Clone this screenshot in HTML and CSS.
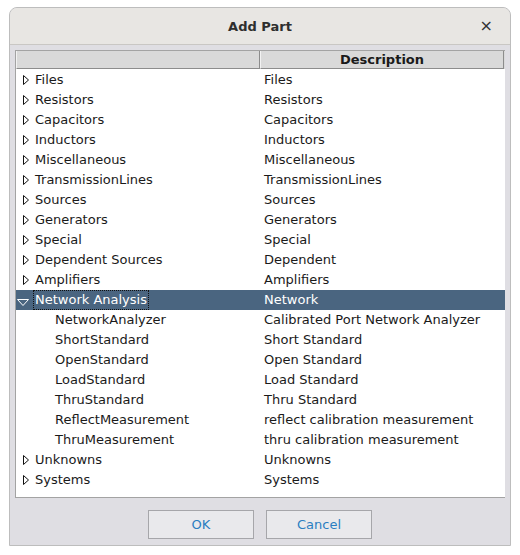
FILE: index.html
```html
<!DOCTYPE html>
<html>
<head>
<meta charset="utf-8">
<link rel="stylesheet" href="styles.css">
</head>
<body>
<div class="window">
  <div class="titlebar">
    <span class="title">Add Part</span>
    <span class="close">×</span>
  </div>
  <div class="content">
    <div class="tree">
      <div class="header">
        <div class="hcell"></div>
        <div class="hcell">Description</div>
      </div>
      <div class="rows">
        <div class="row"><div class="c1"><svg class="tri" width="6" height="10" viewBox="0 0 6 10"><path d="M0.5 0.5 L5.5 5 L0.5 9.5 Z" fill="none" stroke="#111" stroke-width="1"/></svg>Files</div><div class="c2">Files</div></div>
        <div class="row"><div class="c1"><svg class="tri" width="6" height="10" viewBox="0 0 6 10"><path d="M0.5 0.5 L5.5 5 L0.5 9.5 Z" fill="none" stroke="#111" stroke-width="1"/></svg>Resistors</div><div class="c2">Resistors</div></div>
        <div class="row"><div class="c1"><svg class="tri" width="6" height="10" viewBox="0 0 6 10"><path d="M0.5 0.5 L5.5 5 L0.5 9.5 Z" fill="none" stroke="#111" stroke-width="1"/></svg>Capacitors</div><div class="c2">Capacitors</div></div>
        <div class="row"><div class="c1"><svg class="tri" width="6" height="10" viewBox="0 0 6 10"><path d="M0.5 0.5 L5.5 5 L0.5 9.5 Z" fill="none" stroke="#111" stroke-width="1"/></svg>Inductors</div><div class="c2">Inductors</div></div>
        <div class="row"><div class="c1"><svg class="tri" width="6" height="10" viewBox="0 0 6 10"><path d="M0.5 0.5 L5.5 5 L0.5 9.5 Z" fill="none" stroke="#111" stroke-width="1"/></svg>Miscellaneous</div><div class="c2">Miscellaneous</div></div>
        <div class="row"><div class="c1"><svg class="tri" width="6" height="10" viewBox="0 0 6 10"><path d="M0.5 0.5 L5.5 5 L0.5 9.5 Z" fill="none" stroke="#111" stroke-width="1"/></svg>TransmissionLines</div><div class="c2">TransmissionLines</div></div>
        <div class="row"><div class="c1"><svg class="tri" width="6" height="10" viewBox="0 0 6 10"><path d="M0.5 0.5 L5.5 5 L0.5 9.5 Z" fill="none" stroke="#111" stroke-width="1"/></svg>Sources</div><div class="c2">Sources</div></div>
        <div class="row"><div class="c1"><svg class="tri" width="6" height="10" viewBox="0 0 6 10"><path d="M0.5 0.5 L5.5 5 L0.5 9.5 Z" fill="none" stroke="#111" stroke-width="1"/></svg>Generators</div><div class="c2">Generators</div></div>
        <div class="row"><div class="c1"><svg class="tri" width="6" height="10" viewBox="0 0 6 10"><path d="M0.5 0.5 L5.5 5 L0.5 9.5 Z" fill="none" stroke="#111" stroke-width="1"/></svg>Special</div><div class="c2">Special</div></div>
        <div class="row"><div class="c1"><svg class="tri" width="6" height="10" viewBox="0 0 6 10"><path d="M0.5 0.5 L5.5 5 L0.5 9.5 Z" fill="none" stroke="#111" stroke-width="1"/></svg>Dependent Sources</div><div class="c2">Dependent</div></div>
        <div class="row"><div class="c1"><svg class="tri" width="6" height="10" viewBox="0 0 6 10"><path d="M0.5 0.5 L5.5 5 L0.5 9.5 Z" fill="none" stroke="#111" stroke-width="1"/></svg>Amplifiers</div><div class="c2">Amplifiers</div></div>
        <div class="row selected"><div class="c1"><svg class="tri-down" width="12" height="7" viewBox="0 0 12 7"><path d="M0.5 0.5 L11.5 0.5 L6 6.5 Z" fill="none" stroke="#ffffff" stroke-width="1"/></svg><span class="focus">Network Analysis</span></div><div class="c2">Network</div></div>
        <div class="row"><div class="c1 child">NetworkAnalyzer</div><div class="c2">Calibrated Port Network Analyzer</div></div>
        <div class="row"><div class="c1 child">ShortStandard</div><div class="c2">Short Standard</div></div>
        <div class="row"><div class="c1 child">OpenStandard</div><div class="c2">Open Standard</div></div>
        <div class="row"><div class="c1 child">LoadStandard</div><div class="c2">Load Standard</div></div>
        <div class="row"><div class="c1 child">ThruStandard</div><div class="c2">Thru Standard</div></div>
        <div class="row"><div class="c1 child">ReflectMeasurement</div><div class="c2">reflect calibration measurement</div></div>
        <div class="row"><div class="c1 child">ThruMeasurement</div><div class="c2">thru calibration measurement</div></div>
        <div class="row"><div class="c1"><svg class="tri" width="6" height="10" viewBox="0 0 6 10"><path d="M0.5 0.5 L5.5 5 L0.5 9.5 Z" fill="none" stroke="#111" stroke-width="1"/></svg>Unknowns</div><div class="c2">Unknowns</div></div>
        <div class="row"><div class="c1"><svg class="tri" width="6" height="10" viewBox="0 0 6 10"><path d="M0.5 0.5 L5.5 5 L0.5 9.5 Z" fill="none" stroke="#111" stroke-width="1"/></svg>Systems</div><div class="c2">Systems</div></div>
      </div>
    </div>
    <div class="buttons">
      <button class="btn">OK</button>
      <button class="btn">Cancel</button>
    </div>
  </div>
</div>
</body>
</html>
```

FILE: styles.css
```css
html, body {
  margin: 0;
  padding: 0;
  background: #ffffff;
}
body {
  font-family: "DejaVu Sans", sans-serif;
  font-size: 13px;
  color: #1a1a1a;
}
.window {
  margin: 7px 0 0 9px;
  width: 500px;
  height: 537px;
  border: 1px solid #bdbdbd;
  border-radius: 8px 8px 0 0;
  background: #dfdee3;
  display: flex;
  flex-direction: column;
  overflow: hidden;
}
.titlebar {
  height: 36px;
  background: #e8e6e3;
  border-bottom: 1px solid #c9c7c4;
  display: flex;
  align-items: center;
  justify-content: center;
  position: relative;
}
.title {
  font-weight: bold;
  font-size: 13px;
  color: #2e2e2e;
}
.close {
  position: absolute;
  right: 17px;
  top: 8px;
  font-size: 16px;
  color: #333;
}
.content {
  padding: 5px 5px 0 5px;
  display: flex;
  flex-direction: column;
}
.tree {
  height: 446px;
  border: 1px solid #a3a3a3;
  border-right: none;
  background: #ffffff;
  display: flex;
  flex-direction: column;
}
.header {
  display: grid;
  grid-template-columns: 244px 244px;
  height: 18px;
  background: #d9d9d9;
}
.hcell {
  border-right: 1px solid #8c8c8c;
  border-bottom: 1px solid #8c8c8c;
  border-left: 1px solid #f2f2f2;
  text-align: center;
  font-weight: bold;
  line-height: 17px;
  color: #1a1a1a;
}
.rows {
  display: flex;
  flex-direction: column;
  padding-top: 1px;
}
.row {
  display: grid;
  grid-template-columns: 247px 1fr;
  height: 20px;
  line-height: 20px;
  white-space: nowrap;
}
.c1 {
  display: flex;
  align-items: center;
}
.c1.child {
  padding-left: 39px;
}
.c2 {
  padding-left: 1px;
}
.tri {
  display: block;
  margin-left: 7px;
  margin-right: 6px;
  flex: none;
}
.selected {
  background: #4a6580;
  color: #ffffff;
}
.tri-down {
  display: block;
  margin-left: 1px;
  margin-right: 6px;
  margin-top: 5px;
  flex: none;
}
.focus {
  outline: 1px dotted #111;
  line-height: 18px;
  padding: 0 1px;
  margin-left: -1px;
}
.buttons {
  display: flex;
  justify-content: center;
  gap: 12px;
  padding-top: 12px;
}
.btn {
  width: 106px;
  height: 29px;
  background: #e9e9ec;
  border: 1px solid #a6a6aa;
  border-radius: 0;
  font-family: "DejaVu Sans", sans-serif;
  font-size: 13px;
  color: #2b7ec1;
  padding: 0;
}
```
